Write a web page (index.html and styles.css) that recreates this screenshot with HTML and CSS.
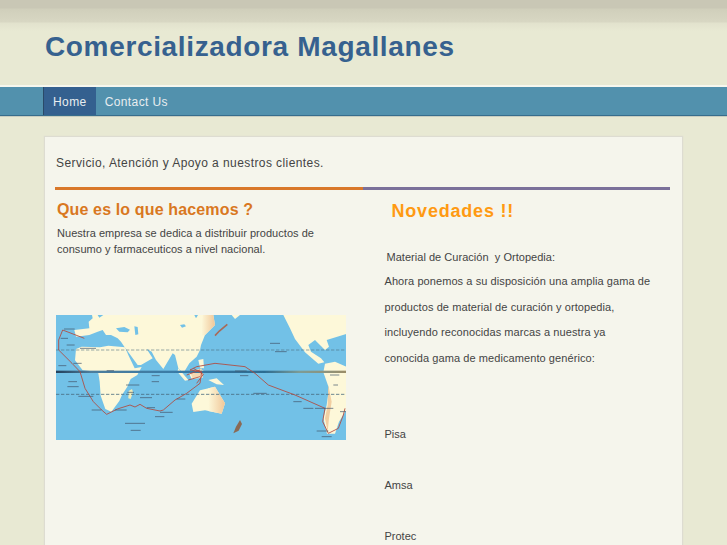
FILE: index.html
```html
<!DOCTYPE html>
<html lang="es">
<head>
<meta charset="utf-8">
<title>Comercializadora Magallanes</title>
<link rel="stylesheet" href="styles.css">
</head>
<body>
<div class="page">
  <header class="header"><h1 class="site-title">Comercializadora Magallanes</h1></header>
  <nav class="nav">
    <a class="nav-item active" href="#">Home</a>
    <a class="nav-item" href="#">Contact Us</a>
  </nav>
  <main class="box">
    <p class="intro">Servicio, Atención y Apoyo a nuestros clientes.</p>
    <div class="columns">
      <section class="col col-left">
        <h2 class="left-title">Que es lo que hacemos ?</h2>
        <p class="left-text">Nuestra empresa se dedica a distribuir productos de consumo y farmaceuticos a nivel nacional.</p>
        <svg class="map" viewBox="0 0 870 375" width="290" height="125" role="img" aria-label="Mapa del mundo">
          <defs>
            <filter id="soft" x="0" y="0" width="100%" height="100%"><feGaussianBlur stdDeviation="1.300"/></filter>
            <linearGradient id="band" x1="0" x2="1" y1="0" y2="0">
              <stop offset="0" stop-color="#23405c"/><stop offset=".12" stop-color="#4d7d9c"/><stop offset=".4" stop-color="#3a7ba6"/><stop offset=".72" stop-color="#2c6c92"/><stop offset=".84" stop-color="#7d9c96"/><stop offset="1" stop-color="#9a8d68"/>
            </linearGradient>
            <linearGradient id="peach" x1="0" x2="1" y1="0" y2="0">
              <stop offset="0" stop-color="#fdf8d9"/><stop offset="1" stop-color="#f0c799"/>
            </linearGradient>
          </defs>
          <g filter="url(#soft)">
            <rect width="870" height="375" fill="#72c1e7"/>
            <path fill="#fdf8d9" d="M108 0 L472 0 L477 30 L462 45 L447 60 L435 90 L432 105 L422 125 L405 140 L400 145 L382 175 L367 160 L357 120 L350 115 L322 162 L300 135 L287 110 L272 102 L290 130 L255 150 L245 150 L205 95 L195 80 L185 70 L165 60 L150 60 L140 45 L125 50 L100 60 L60 65 L55 45 L100 40 L98 20 L110 10 Z"/>
            <path fill="#72c1e7" d="M180 40 L205 36 L222 44 L215 52 L190 50 Z M235 34 L245 36 L247 58 L238 60 Z M125 0 L142 0 L130 8 Z M415 0 L426 0 L420 10 Z M372 30 L385 28 L390 34 L378 38 Z"/>
            <path fill="url(#peach)" d="M440 0 L472 0 L477 30 L462 45 L447 60 L436 62 Z"/>
            <g transform="translate(-48,-30)">
              <path fill="#fdf8d9" d="M108 132 L125 125 L180 127 L205 122 L255 127 L266 152 L284 190 L305 186 L292 210 L272 222 L262 245 L246 270 L238 288 L214 320 L196 312 L182 272 L179 230 L175 205 L150 198 L128 196 L105 166 Z"/>
              <path fill="#f3ecb8" d="M266 258 L276 252 L279 262 L272 282 L265 280 Z"/>
            </g>
            <g transform="translate(282,0)">
              <path fill="#fdf8d9" d="M125 266 L150 226 L195 215 L225 265 L215 296 L165 286 L130 291 Z"/>
              <path fill="url(#peach)" d="M175 220 L195 215 L225 265 L215 296 L175 288 Z"/>
              <path fill="#fdf8d9" d="M175 195 L200 190 L222 210 L200 208 Z M85 160 L115 195 L105 197 L82 170 Z M115 170 L160 165 L158 188 L125 192 Z M145 135 L160 132 L162 160 L150 158 Z"/>
              <path fill="#f3d8b2" d="M120 170 L155 160 L158 182 L128 190 Z"/>
              <path fill="none" stroke="#a86a58" stroke-width="5" d="M195 62 L208 48 L232 28"/>
              <path fill="#fdf8d9" d="M245 0 L270 0 L255 12 Z"/>
              <path fill="#8a6a55" d="M250 355 L258 335 L270 315 L276 327 L266 347 Z"/>
            </g>
            <g transform="translate(417,-30)">
              <path fill="#fdf8d9" d="M265 30 L285 70 L300 102 L330 142 L370 176 L388 172 L378 160 L348 140 L340 120 L360 105 L390 135 L402 125 L395 105 L456 86 L456 30 Z"/>
              <path fill="#fdf8d9" d="M390 176 L420 170 L456 186 L456 312 L432 350 L420 386 L396 386 L385 340 L395 300 L402 250 L385 202 Z"/>
              <path fill="#f2cfa2" d="M400 240 L410 290 L402 340 L398 380 L390 340 L398 300 Z"/>
            </g>
            <rect y="167" width="870" height="7" fill="url(#band)"/>
            <g fill="none" stroke="#486a7c" stroke-width="2.400" stroke-dasharray="10 5">
              <path d="M0 105H870" opacity=".7"/>
              <path d="M0 238H870"/>
            </g>
            <path fill="none" stroke="#b14a3f" stroke-width="2.600" d="M20 45 L85 70 M20 45 L8 75 L8 105 L48 145 L72 170 L87 220 L112 260 L137 285 L152 298 L184 282 L222 270 L237 276 L252 268 L272 280 L312 288 L322 285 L357 255 L392 235 L432 205 L437 170 L402 165 L422 155 L477 145 L567 155 L597 175 L637 210 L717 240 L807 280 L800 320 L817 355 L847 340 L862 300 L867 280 M392 180 L432 165 M397 195 L432 185 M412 160 L442 178 L422 205"/>
            <g transform="translate(-48,-30)" stroke="#44566b" stroke-width="3" opacity=".7" fill="none">
              <path d="M72 72h32 M62 100h22 M80 120h24 M120 130h48 M55 182h24 M100 175h25 M85 230h26 M82 245h34 M115 274h45 M155 315h30 M225 315h35 M200 197h22 M335 212h24 M335 230h22 M258 240h40 M262 262h20 M300 278h36 M320 308h25 M360 322h38 M345 335h28 M255 355h60 M272 376h30 M410 282h26"/>
              <path d="M690 115h30 M705 140h35 M585 198h35 M600 212h25 M640 265h40 M760 290h25 M790 310h30 M825 310h55 M870 210h28 M880 240h14 M830 378h35 M845 395h30 M900 320h20"/>
            </g>
          </g>
        </svg>
      </section>
      <section class="col col-right">
        <h2 class="right-title">Novedades !!</h2>
        <p class="lead">Material de Curación&nbsp; y Ortopedia:</p>
        <p class="news">Ahora ponemos a su disposición una amplia gama de productos de material de curación y ortopedia, incluyendo reconocidas marcas a nuestra ya conocida gama de medicamento genérico:</p>
        <p class="brand first">Pisa</p>
        <p class="brand">Amsa</p>
        <p class="brand">Protec</p>
      </section>
    </div>
  </main>
</div>
</body>
</html>
```
FILE: styles.css
```css
html, body { margin: 0; padding: 0; }
body {
  background: #e8e9d3;
  font-family: "Liberation Sans", Arial, sans-serif;
  color: #444;
}
.page { height: 545px; overflow: hidden; }
.header {
  height: 85px;
  box-sizing: border-box;
  padding: 30px 0 0 45px;
  background: linear-gradient(#c9c7b5 0, #c9c7b5 8px, #d0cfbb 9px, #d8d7c3 22px, #e2e2cd 23px, #e8e9d3 31px);
}
.site-title {
  margin: 0;
  font-size: 28px;
  line-height: 34px;
  font-weight: bold;
  letter-spacing: 0.65px;
  color: #36618f;
}
.nav {
  display: flex;
  height: 28px;
  padding-left: 43px;
  background: #5291ad;
  border-top: 2px solid #f6f7ee;
  border-bottom: 1px solid #376d8c;
  box-shadow: 0 1px 0 #c9cdc0;
}
.nav-item {
  padding: 0 9px;
  font-size: 12px;
  line-height: 30px;
  letter-spacing: 0.4px;
  color: #e8edf0;
  text-decoration: none;
}
.nav-item.active {
  padding: 0 9px 0 9px;
  background: #34608f;
  border-left: 1px solid #2a4a68;
}
.box {
  margin: 20px 44px 0 44px;
  padding: 0 12px 0 10px;
  min-height: 500px;
  background: #f5f5ec;
  border: 1px solid #dddcd1;
  box-shadow: 0 0 1px #dddcd1;
}
.intro {
  margin: 0;
  padding: 18px 0 0 1px;
  height: 32px;
  font-size: 12px;
  line-height: 16px;
  letter-spacing: 0.42px;
}
.columns { display: flex; }
.col { width: 307.5px; box-sizing: border-box; }
.col-left { border-top: 3px solid #d9782a; padding: 0 17px 0 1px; }
.col-right { border-top: 3px solid #7a7099; padding-left: 22px; }
.left-title {
  margin: 0;
  padding: 10px 0 0 1px;
  font-size: 16px;
  line-height: 20px;
  font-weight: bold;
  letter-spacing: 0.14px;
  color: #d9781f;
}
.left-text {
  margin: 5px 0 0 1px;
  font-size: 11px;
  line-height: 16px;
  letter-spacing: 0.04px;
}
.map { display: block; margin-top: 58px; }
.right-title {
  margin: 0;
  padding: 10px 0 0 7px;
  font-size: 18px;
  line-height: 22px;
  letter-spacing: 0.8px;
  font-weight: bold;
  color: #ff9a12;
}
.lead {
  margin: 27px 0 0 2px;
  font-size: 11px;
  line-height: 16px;
  letter-spacing: 0.03px;
}
.news {
  margin: 0;
  padding-top: 4px;
  font-size: 11px;
  line-height: 25.5px;
  letter-spacing: 0.08px;
  width: 268px;
}
.brand {
  margin: 0;
  padding-top: 35px;
  font-size: 11px;
  line-height: 16px;
}
.brand.first { padding-top: 55px; }
```
